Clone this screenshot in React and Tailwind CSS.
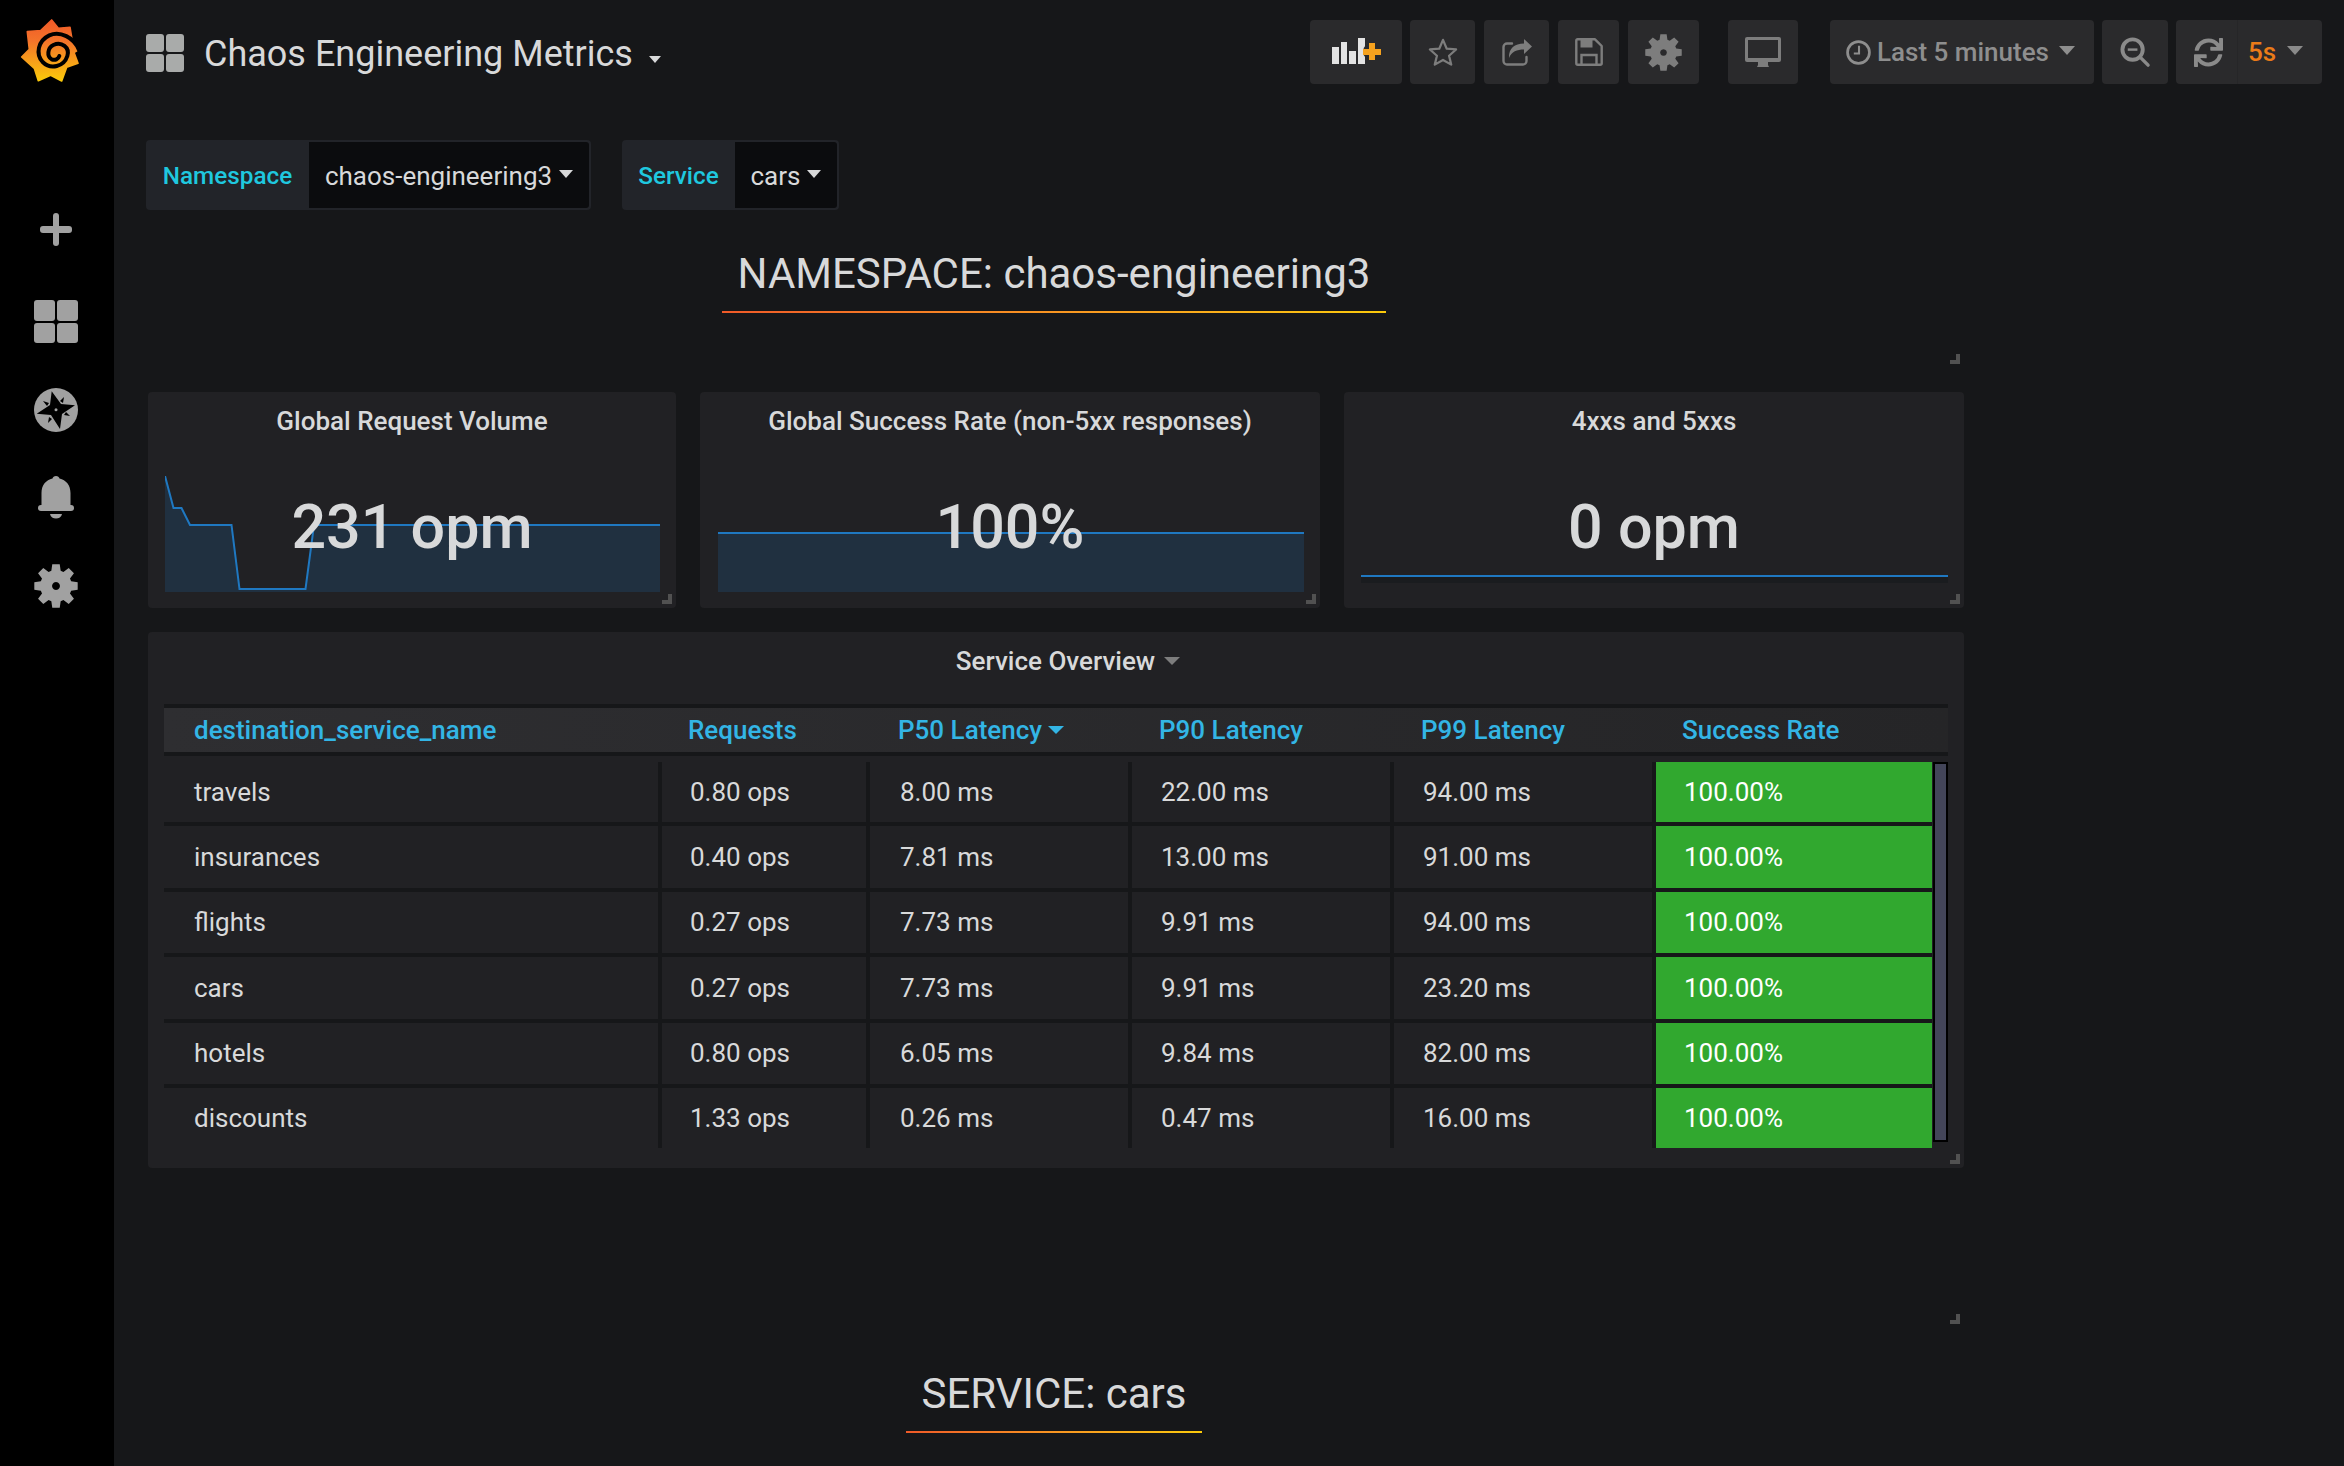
import React from 'react';
import { FaSync } from 'react-icons/fa';

const font = { fontFamily: 'Roboto, sans-serif' };

// 8 tooth gear used in the side menu and the toolbar
const gearPath = (() => {
  const pts = [];
  for (let i = 0; i < 8; i++) {
    const a = (i * Math.PI) / 4;
    [[-0.3, 36], [-0.17, 50], [0.17, 50], [0.3, 36]].forEach(([da, r]) => {
      pts.push(`${(50 + r * Math.sin(a + da)).toFixed(1)} ${(50 - r * Math.cos(a + da)).toFixed(1)}`);
    });
  }
  return `M${pts.join('L')}Z M50 41a9 9 0 1 0 0.01 0Z`;
})();

const Gear = ({ className }) => (
  <svg viewBox="0 0 100 100" className={className}>
    <path d={gearPath} fill="currentColor" fillRule="evenodd" strokeLinejoin="round" />
  </svg>
);

const GridIcon = ({ className }) => (
  <div className={`grid grid-cols-2 gap-[2px] ${className}`}>
    <div className="rounded-[3px] bg-current" />
    <div className="rounded-[3px] bg-current" />
    <div className="rounded-[3px] bg-current" />
    <div className="rounded-[3px] bg-current" />
  </div>
);

const Logo = () => (
  <svg viewBox="0 0 270 240" className="w-[90px] h-[80px] ml-[10px] mt-[10px]">
    <defs>
      <linearGradient id="logoFill" x1="0" y1="0" x2="0" y2="1">
        <stop offset="0" stopColor="#f05a28" />
        <stop offset="0.35" stopColor="#f4742a" />
        <stop offset="1" stopColor="#fbca0a" />
      </linearGradient>
    </defs>
    <path
      d="M125 30L145 55L180 52L186 88L207 118L192 128L204 160L170 172L155 213L122 196L85 212L73 175L35 141L58 118L52 65L92 62Z"
      fill="url(#logoFill)"
      stroke="url(#logoFill)"
      strokeWidth="5"
      strokeLinejoin="round"
    />
    <path
      d="M207 120C192 82 150 62 118 76C84 92 76 132 98 156C122 180 162 170 172 138C180 112 155 94 130 105C112 114 110 140 125 148C135 152 145 148 148 138"
      fill="none"
      stroke="#000"
      strokeWidth="12"
      strokeLinecap="round"
    />
  </svg>
);

const SideMenu = () => (
  <div className="w-[114px] shrink-0 bg-black text-[#a1a1a1] flex flex-col">
    <div className="h-[100px]">
      <Logo />
    </div>
    <div className="relative w-[32px] h-[33px] ml-[40px] mt-[113px]">
      <div className="absolute left-[13px] top-0 w-[6px] h-[33px] rounded-[3px] bg-current" />
      <div className="absolute left-0 top-[13px] w-[32px] h-[7px] rounded-[3px] bg-current" />
    </div>
    <GridIcon className="w-[44px] h-[43px] ml-[34px] mt-[54px]" />
    <svg viewBox="0 0 44 44" className="w-[44px] h-[44px] ml-[34px] mt-[45px]">
      <circle cx="22" cy="22" r="22" fill="currentColor" />
      <path d="M17.7 3.3L27 16L41 17.3L28 26L26 41L17 27L2.7 25.7L16 17Z" fill="#000" />
      <path d="M30 9L29 15L26 13ZM36 28L30 27L32 24ZM14 35L15 29L18 31ZM9 13L15 15L13 18Z" fill="#000" />
      <circle cx="22" cy="21.7" r="1.5" fill="currentColor" />
    </svg>
    <svg viewBox="0 0 36 44" className="w-[36px] h-[44px] ml-[38px] mt-[44px]">
      <path
        d="M18 0C16 0 15 1 14.5 2.5C8 4 3.5 9 3.5 17V29H3a3 3 0 0 0 0 6H33a3 3 0 0 0 0-6H32.5V17C32.5 9 28 4 21.5 2.5C21 1 20 0 18 0ZM12 38H24C23 44 13 44 12 38Z"
        fill="currentColor"
      />
    </svg>
    <Gear className="w-[44px] h-[44px] ml-[34px] mt-[44px]" />
  </div>
);

const Caret = ({ className, size = 'border-x-[6px] border-t-[7px]' }) => (
  <div className={`w-0 h-0 border-x-transparent border-t-current ${size} ${className}`} />
);

const ToolButton = ({ className, children }) => (
  <div className={`h-[64px] rounded-[4px] bg-[#2a2a2c] text-[#7d7d7d] flex items-center ${className}`}>
    {children}
  </div>
);

const TopBar = () => (
  <div className="flex items-start pt-[20px] h-[84px]">
    <GridIcon className="w-[38px] h-[38px] mt-[14px] text-[#a9abaa]" />
    <div className="ml-[20px] mt-[13px] text-[36px] leading-[42px] text-[#d8d9da]">Chaos Engineering Metrics</div>
    <Caret className="ml-[16px] mt-[36px] text-[#d8d9da]" />
    <div className="ml-auto flex items-start mr-[22px]">
      <ToolButton className="w-[92px] relative justify-center">
        <div className="absolute left-[22px] top-[27px] w-[7px] h-[17px] bg-[#e3e3e3]" />
        <div className="absolute left-[31px] top-[22px] w-[6px] h-[22px] bg-[#e3e3e3]" />
        <div className="absolute left-[39px] top-[31px] w-[7px] h-[13px] bg-[#e3e3e3]" />
        <div className="absolute left-[48px] top-[18px] w-[7px] h-[26px] bg-[#e3e3e3]" />
        <div className="absolute left-[53px] top-[23px] w-[17px] h-[17px] rounded-full bg-[#2a2a2c]" />
        <div className="absolute left-[59px] top-[23px] w-[6px] h-[17px] bg-[#f6a21e]" />
        <div className="absolute left-[53px] top-[29px] w-[18px] h-[6px] bg-[#f6a21e]" />
      </ToolButton>
      <ToolButton className="w-[65px] ml-[8px] justify-center">
        <svg viewBox="0 0 32 30" className="w-[30px] h-[28px]">
          <path
            d="M16 2L20 11.5L30 12.3L22.5 19L24.8 28.5L16 23.5L7.2 28.5L9.5 19L2 12.3L12 11.5Z"
            fill="none"
            stroke="currentColor"
            strokeWidth="2.4"
            strokeLinejoin="round"
          />
        </svg>
      </ToolButton>
      <ToolButton className="w-[65px] ml-[9px] justify-center">
        <svg viewBox="0 0 30 27" className="w-[30px] h-[27px]">
          <path
            d="M10 4.5H5A3.5 3.5 0 0 0 1.5 8V22A3.5 3.5 0 0 0 5 25.5H21A3.5 3.5 0 0 0 24.500 22V18"
            fill="none"
            stroke="currentColor"
            strokeWidth="2.4"
            strokeLinecap="round"
          />
          <path d="M22 0L30 7.500L22 15V10.500C15 10.500 9.500 12.500 7 19C6.500 10 12 4.500 22 4.500Z" fill="currentColor" />
        </svg>
      </ToolButton>
      <ToolButton className="w-[61px] ml-[9px] justify-center">
        <svg viewBox="0 0 28 28" className="w-[28px] h-[28px]">
          <path
            d="M2.500 1.300H20L26.700 8V25.200A1.500 1.500 0 0 1 25.200 26.700H2.800A1.500 1.500 0 0 1 1.300 25.200V2.500A1.200 1.200 0 0 1 2.500 1.300Z"
            fill="none"
            stroke="currentColor"
            strokeWidth="2.400"
            strokeLinejoin="round"
          />
          <path d="M5.500 1.300H17.500V9.500H5.500Z" fill="currentColor" />
          <path d="M6.500 26V17H21.500V26" fill="none" stroke="currentColor" strokeWidth="2.400" />
        </svg>
      </ToolButton>
      <ToolButton className="w-[71px] ml-[9px] justify-center">
        <Gear className="w-[37px] h-[37px]" />
      </ToolButton>
      <ToolButton className="w-[70px] ml-[29px] justify-center">
        <svg viewBox="0 0 36 30" className="w-[36px] h-[30px]">
          <path
            fillRule="evenodd"
            d="M2 0H34A2 2 0 0 1 36 2V23A2 2 0 0 1 34 25H23V28L24 30H12L13 28V25H2A2 2 0 0 1 0 23V2A2 2 0 0 1 2 0ZM3 3V21H33V3Z"
            fill="currentColor"
          />
        </svg>
      </ToolButton>
      <ToolButton className="w-[264px] ml-[32px] pl-[16px] text-[#8e8e8e] text-[26px] font-medium">
        <svg viewBox="0 0 24 24" className="w-[25px] h-[25px] mr-[6px]" fill="none" stroke="currentColor" strokeWidth="2.6">
          <circle cx="12" cy="12" r="10.500" />
          <path d="M12.500 5.500V13H7.500" strokeWidth="2" />
        </svg>
        <span>Last 5 minutes</span>
        <Caret className="ml-[10px] mb-[4px]" size="border-x-[8px] border-t-[9px]" />
      </ToolButton>
      <ToolButton className="w-[66px] ml-[8px] justify-center text-[#8a8a8a]">
        <svg viewBox="0 0 32 32" className="w-[31px] h-[31px]" fill="none" stroke="currentColor">
          <circle cx="13" cy="13" r="10.500" strokeWidth="4" />
          <path d="M20.500 20.500L29 29" strokeWidth="3.500" strokeLinecap="round" />
          <path d="M8 13H18" strokeWidth="2.500" />
        </svg>
      </ToolButton>
      <ToolButton className="w-[146px] ml-[8px] text-[#8a8a8a]">
        <div className="w-[62px] h-full flex items-center justify-center border-r border-r-[#262628]">
          <FaSync className="w-[29px] h-[29px] ml-[4px]" />
        </div>
        <span className="ml-[10px] text-[26px] font-medium text-[#eb7b18]">5s</span>
        <Caret className="ml-[11px] mb-[4px]" size="border-x-[8px] border-t-[9px]" />
      </ToolButton>
    </div>
  </div>
);

const Variable = ({ label, value, labelW, valueW, className = '' }) => (
  <div className={`flex h-[70px] rounded-[4px] bg-[#222429] ${className}`}>
    <div className={`${labelW} flex items-center justify-center text-[24.3px] pt-[2px] font-medium text-[#1fc8df]`}>{label}</div>
    <div className={`${valueW} my-[2px] mr-[2px] rounded-r-[3px] bg-[#0b0c0e] flex items-center justify-center text-[26px] text-[#d8d9da]`}>
      <span className="pt-[2px]">{value}</span>
      <Caret className="ml-[7px] mb-[3px] text-[#d8d9da]" size="border-x-[7px] border-t-[8px]" />
    </div>
  </div>
);

const Handle = ({ className = 'right-[4px] bottom-[4px]' }) => (
  <div className={`absolute w-[10px] h-[10px] ${className}`}>
    <div className="absolute right-0 bottom-0 w-[10px] h-[4px] bg-[#515151]" />
    <div className="absolute right-0 bottom-0 w-[4px] h-[10px] bg-[#515151]" />
  </div>
);

const Heading = ({ text, lineW, className = '' }) => (
  <div className={`flex flex-col items-center pr-[4px] ${className}`}>
    <div className="text-[42px] leading-[50px] text-[#d8d9da]">{text}</div>
    <div className={`${lineW} mt-[12px] h-[2px] bg-gradient-to-r from-[#f05a28] to-[#fbca0a]`} />
  </div>
);

const StatPanel = ({ title, value, className, chart }) => (
  <div className={`relative h-[216px] rounded-[4px] bg-[#212124] flex flex-col items-center ${className}`}>
    {chart}
    <div className="relative mt-[12px] text-[26px] leading-[34px] font-medium text-[#d8d9da]">{title}</div>
    <div className="relative mt-[49px] text-[61px] leading-[80px] font-medium text-[#d8d9da]">{value}</div>
    <Handle />
  </div>
);

const cols = [
  { w: 'w-[494px]', head: 'destination_service_name', pad: 'pl-[30px]', headPad: 'pl-[30px]' },
  { w: 'w-[204px]', head: 'Requests', pad: 'pl-[28px]', headPad: 'pl-[26px]' },
  { w: 'w-[258px]', head: 'P50 Latency', pad: 'pl-[30px]', headPad: 'pl-[28px]', sorted: true },
  { w: 'w-[258px]', head: 'P90 Latency', pad: 'pl-[29px]', headPad: 'pl-[27px]' },
  { w: 'w-[258px]', head: 'P99 Latency', pad: 'pl-[29px]', headPad: 'pl-[27px]' },
  { w: 'w-[276px]', head: 'Success Rate', pad: 'pl-[28px]', headPad: 'pl-[26px]' },
];

const rows = [
  { h: 'h-[60px]', cells: ['travels', '0.80 ops', '8.00 ms', '22.00 ms', '94.00 ms', '100.00%'] },
  { h: 'h-[62px]', cells: ['insurances', '0.40 ops', '7.81 ms', '13.00 ms', '91.00 ms', '100.00%'] },
  { h: 'h-[61px]', cells: ['flights', '0.27 ops', '7.73 ms', '9.91 ms', '94.00 ms', '100.00%'] },
  { h: 'h-[62px]', cells: ['cars', '0.27 ops', '7.73 ms', '9.91 ms', '23.20 ms', '100.00%'] },
  { h: 'h-[61px]', cells: ['hotels', '0.80 ops', '6.05 ms', '9.84 ms', '82.00 ms', '100.00%'] },
  { h: 'h-[60px]', cells: ['discounts', '1.33 ops', '0.26 ms', '0.47 ms', '16.00 ms', '100.00%'] },
];

const ServiceTable = () => (
  <div className="relative mt-[24px] h-[536px] rounded-[4px] bg-[#212124] px-[16px] text-[26px]">
    <div className="h-[72px] flex items-center justify-center font-medium text-[#d8d9da] pl-[24px] pb-[14px]">
      <span>Service Overview</span>
      <Caret className="ml-[9px] text-[#7d7d7d]" size="border-x-[8px] border-t-[8px]" />
    </div>
    <div className="h-[52px] border-y-4 border-y-[#161719] flex items-center bg-gradient-to-r from-[#2e2e31] to-[#252527] font-medium text-[#33b5e5]">
      {cols.map((c, i) => (
        <div key={c.head} className={`${c.w} ${c.headPad} ${i < 5 ? 'mr-[4px]' : ''} flex items-center shrink-0`}>
          <span className="pt-[1px]">{c.head}</span>
          {c.sorted && <Caret className="ml-[6px]" size="border-x-[8px] border-t-[8px]" />}
        </div>
      ))}
    </div>
    <div className="flex mt-[6px]">
      <div className="flex flex-col gap-[4px] bg-[#161719]">
        {rows.map((r) => (
          <div key={r.cells[0]} className={`flex gap-[4px] ${r.h}`}>
            {r.cells.map((cell, i) => (
              <div
                key={cols[i].head}
                className={`${cols[i].w} ${cols[i].pad} flex items-center shrink-0 ${i === 5 ? 'bg-[#31a82f] text-white' : 'bg-[#212124] text-[#d8d9da]'}`}
              >
                {cell}
              </div>
            ))}
          </div>
        ))}
      </div>
      <div className="w-[15px] h-[380px] ml-[1px] border-2 border-black bg-[#434559]" />
    </div>
    <Handle />
  </div>
);

const RequestChart = () => (
  <svg viewBox="0 0 495 116" className="absolute left-[17px] top-[84px] w-[495px] h-[116px]">
    <path d="M0 0L8.500 32H16.500L25 49H66.500L74.500 113H140.500L149 49H495V116H0Z" fill="#203040" />
    <path d="M0 0L8.500 32H16.500L25 49H66.500L74.500 113H140.500L149 49H495" fill="none" stroke="#1f78c1" strokeWidth="2" />
  </svg>
);

const SuccessChart = () => (
  <div className="absolute left-[18px] top-[140px] w-[586px] h-[60px] border-t-2 border-t-[#1f78c1] bg-[#203040]" />
);

const ErrorChart = () => (
  <div className="absolute left-[17px] top-[183px] w-[587px] h-[8px] border-t-2 border-t-[#1f78c1] bg-[#1a1c1f]" />
);

const App = () => (
  <div className="flex w-[2344px] h-[1466px] overflow-hidden bg-[#161719]" style={font}>
    <SideMenu />
    <div className="flex-1 pl-[32px]">
      <TopBar />
      <div className="flex mt-[56px]">
        <Variable label="Namespace" value="chaos-engineering3" labelW="w-[163px]" valueW="w-[280px]" />
        <Variable label="Service" value="cars" labelW="w-[113px]" valueW="w-[102px]" className="ml-[31px]" />
      </div>
      <div className="w-[1816px] ml-[2px]">
        <div className="relative h-[158px] pt-[39px]">
          <Heading text="NAMESPACE: chaos-engineering3" lineW="w-[664px]" />
          <Handle />
        </div>
        <div className="flex gap-[24px] mt-[24px]">
          <StatPanel title="Global Request Volume" value="231 opm" className="w-[528px]" chart={<RequestChart />} />
          <StatPanel title="Global Success Rate (non-5xx responses)" value="100%" className="w-[620px]" chart={<SuccessChart />} />
          <StatPanel title="4xxs and 5xxs" value="0 opm" className="w-[620px]" chart={<ErrorChart />} />
        </div>
        <ServiceTable />
        <div className="relative h-[160px]">
          <Handle />
        </div>
        <Heading text="SERVICE: cars" lineW="w-[296px]" className="mt-[41px]" />
      </div>
    </div>
  </div>
);

export default App;
